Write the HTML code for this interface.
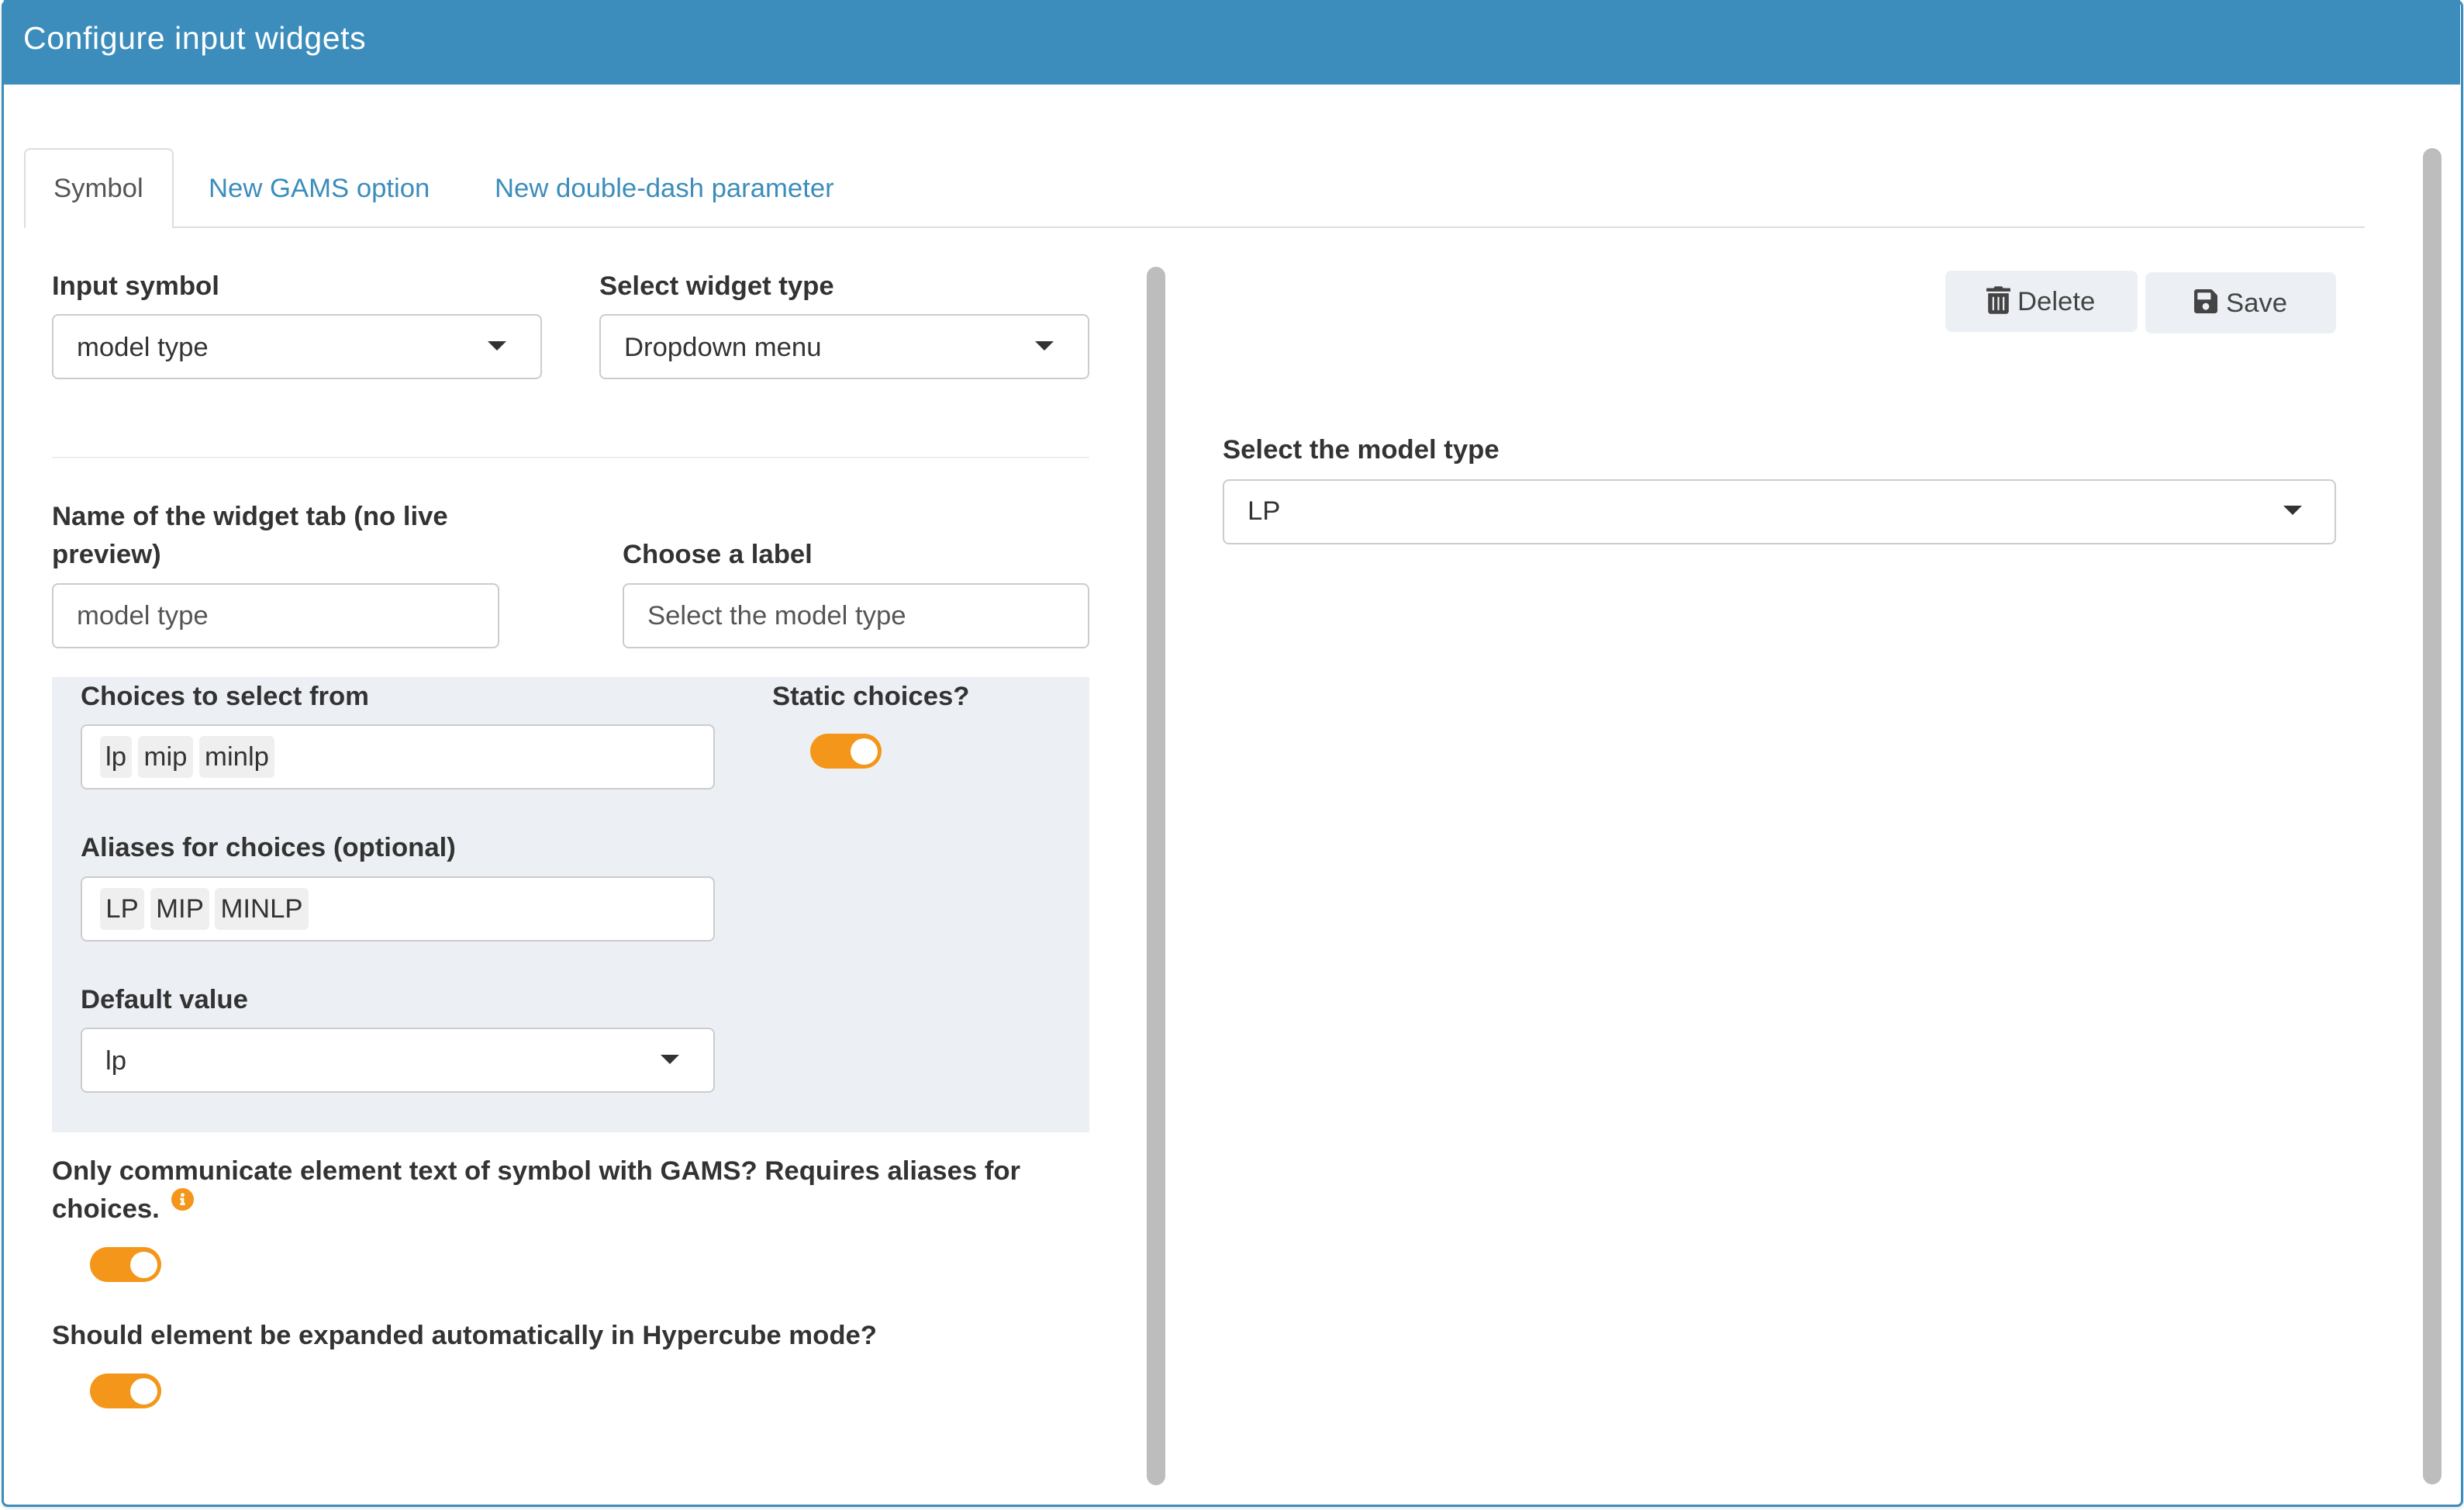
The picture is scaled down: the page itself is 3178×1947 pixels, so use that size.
<!DOCTYPE html>
<html>
<head>
<meta charset="utf-8">
<title>Configure input widgets</title>
<style>
html,body{margin:0;padding:0;background:#fff}
body{position:relative;width:3178px;height:1947px;overflow:hidden;font-family:"Liberation Sans",sans-serif;color:#333}
.a{position:absolute;box-sizing:border-box}
.t{position:absolute;white-space:nowrap;font-size:34.7px;line-height:48px;height:48px}
.b{font-weight:700}
.box{position:absolute;box-sizing:border-box;background:#fff;border:2px solid #ccc;border-radius:8px}
.arr{position:absolute;width:0;height:0;border-left:12.5px solid transparent;border-right:12.5px solid transparent;border-top:12px solid #333}
.chip{position:absolute;background:#efefef;border-radius:6px;font-size:34.7px;line-height:54px;height:54px;text-align:center;white-space:nowrap}
.tog{position:absolute;width:92px;height:45px;border-radius:23px;background:#f39619}
.tog i{position:absolute;left:52px;top:6px;width:35px;height:34px;border-radius:50%;background:#fff}
.sb{position:absolute;width:24px;background:#bdbdbd;border-radius:12px}
.btn{position:absolute;background:#ecf0f5;border-radius:8px}
</style>
</head>
<body>
<div class="a" style="left:2px;top:0;width:3175px;height:1943px;border:3px solid #3c8dbc;border-radius:8px;background:#fff;box-shadow:0 2px 4px rgba(0,0,0,.12)"></div>
<div class="a" style="left:5px;top:0;width:3168px;height:109px;background:#3c8dbc"></div>
<div class="t" style="left:30px;top:25px;color:#fff;font-size:41px;letter-spacing:.6px">Configure input widgets</div>

<!-- tabs -->
<div class="a" style="left:223px;top:292px;width:2827px;height:2px;background:#ddd"></div>
<div class="a" style="left:31px;top:191px;width:193px;height:103px;border:2px solid #ddd;border-bottom:0;border-radius:8px 8px 0 0;background:#fff"></div>
<div class="t" style="left:69px;top:219px;color:#555">Symbol</div>
<div class="t" style="left:269px;top:219px;color:#3c8dbc">New GAMS option</div>
<div class="t" style="left:638px;top:219px;color:#3c8dbc">New double-dash parameter</div>

<!-- top selects -->
<div class="t b" style="left:67px;top:345px">Input symbol</div>
<div class="t b" style="left:773px;top:345px">Select widget type</div>
<div class="box" style="left:67px;top:405px;width:632px;height:84px"></div>
<div class="t" style="left:99px;top:424px">model type</div>
<div class="arr" style="left:629px;top:440px"></div>
<div class="box" style="left:773px;top:405px;width:632px;height:84px"></div>
<div class="t" style="left:805px;top:424px">Dropdown menu</div>
<div class="arr" style="left:1335px;top:440px"></div>

<div class="a" style="left:67px;top:589px;width:1338px;height:2px;background:#eee"></div>

<!-- name / label -->
<div class="t b" style="left:67px;top:642px">Name of the widget tab (no live</div>
<div class="t b" style="left:67px;top:691px">preview)</div>
<div class="t b" style="left:803px;top:691px">Choose a label</div>
<div class="box" style="left:67px;top:752px;width:577px;height:84px"></div>
<div class="t" style="left:99px;top:770px;color:#555">model type</div>
<div class="box" style="left:803px;top:752px;width:602px;height:84px"></div>
<div class="t" style="left:835px;top:770px;color:#555">Select the model type</div>

<!-- grey box -->
<div class="a" style="left:67px;top:873px;width:1338px;height:587px;background:#ecf0f5"></div>
<div class="t b" style="left:104px;top:874px">Choices to select from</div>
<div class="box" style="left:104px;top:934px;width:818px;height:84px"></div>
<div class="chip" style="left:129px;top:949px;width:41px">lp</div>
<div class="chip" style="left:178px;top:949px;width:71px">mip</div>
<div class="chip" style="left:257px;top:949px;width:97px">minlp</div>

<div class="t b" style="left:104px;top:1069px">Aliases for choices (optional)</div>
<div class="box" style="left:104px;top:1130px;width:818px;height:84px"></div>
<div class="chip" style="left:129px;top:1145px;width:57px">LP</div>
<div class="chip" style="left:194px;top:1145px;width:76px">MIP</div>
<div class="chip" style="left:277px;top:1145px;width:121px">MINLP</div>

<div class="t b" style="left:104px;top:1265px">Default value</div>
<div class="box" style="left:104px;top:1325px;width:818px;height:84px"></div>
<div class="t" style="left:136px;top:1344px">lp</div>
<div class="arr" style="left:852px;top:1360px"></div>

<div class="t b" style="left:996px;top:874px">Static choices?</div>
<div class="tog" style="left:1045px;top:946px"><i></i></div>

<!-- lower -->
<div class="t b" style="left:67px;top:1486px">Only communicate element text of symbol with GAMS? Requires aliases for</div>
<div class="t b" style="left:67px;top:1535px">choices.</div>
<svg class="a" style="left:221px;top:1532px;width:29px;height:29px" viewBox="8 8 496 496"><path fill="#f39619" d="M256 8C119.043 8 8 119.083 8 256c0 136.997 111.043 248 248 248s248-111.003 248-248C504 119.083 392.957 8 256 8zm0 110c23.196 0 42 18.804 42 42s-18.804 42-42 42-42-18.804-42-42 18.804-42 42-42zm56 254c0 6.627-5.373 12-12 12h-88c-6.627 0-12-5.373-12-12v-24c0-6.627 5.373-12 12-12h12v-64h-12c-6.627 0-12-5.373-12-12v-24c0-6.627 5.373-12 12-12h64c6.627 0 12 5.373 12 12v100h12c6.627 0 12 5.373 12 12v24z"/></svg>
<div class="tog" style="left:116px;top:1608px"><i></i></div>
<div class="t b" style="left:67px;top:1698px">Should element be expanded automatically in Hypercube mode?</div>
<div class="tog" style="left:116px;top:1771px"><i></i></div>

<!-- scrollbars -->
<div class="sb" style="left:1479px;top:344px;height:1571px"></div>
<div class="sb" style="left:3125px;top:191px;height:1723px"></div>

<!-- right pane -->
<div class="btn" style="left:2509px;top:349px;width:248px;height:79px"></div>
<svg class="a" style="left:2562px;top:369px;width:31px;height:36px" viewBox="0 0 448 512"><path fill="#444" d="M32 464a48 48 0 0 0 48 48h288a48 48 0 0 0 48-48V128H32zm272-256a16 16 0 0 1 32 0v224a16 16 0 0 1-32 0zm-96 0a16 16 0 0 1 32 0v224a16 16 0 0 1-32 0zm-96 0a16 16 0 0 1 32 0v224a16 16 0 0 1-32 0zM432 32H312l-9.4-18.7A24 24 0 0 0 281.1 0H166.8a23.72 23.72 0 0 0-21.4 13.3L136 32H16A16 16 0 0 0 0 48v32a16 16 0 0 0 16 16h416a16 16 0 0 0 16-16V48a16 16 0 0 0-16-16z"/></svg>
<div class="t" style="left:2602px;top:365px;color:#444">Delete</div>
<div class="btn" style="left:2767px;top:351px;width:246px;height:79px"></div>
<svg class="a" style="left:2830px;top:373px;width:30px;height:31px" viewBox="0 32 448 448" preserveAspectRatio="none"><path fill="#444" d="M433.941 129.941l-83.882-83.882A48 48 0 0 0 316.118 32H48C21.49 32 0 53.49 0 80v352c0 26.51 21.49 48 48 48h352c26.51 0 48-21.49 48-48V163.882a48 48 0 0 0-14.059-33.941zM224 416c-35.346 0-64-28.654-64-64 0-35.346 28.654-64 64-64s64 28.654 64 64c0 35.346-28.654 64-64 64zm96-304.52V212c0 6.627-5.373 12-12 12H76c-6.627 0-12-5.373-12-12V108c0-6.627 5.373-12 12-12h228.52c3.183 0 6.235 1.264 8.485 3.515l3.48 3.48A11.996 11.996 0 0 1 320 111.48z"/></svg>
<div class="t" style="left:2871px;top:367px;color:#444">Save</div>

<div class="t b" style="left:1577px;top:556px">Select the model type</div>
<div class="box" style="left:1577px;top:618px;width:1436px;height:84px"></div>
<div class="t" style="left:1609px;top:635px">LP</div>
<div class="arr" style="left:2945px;top:652px"></div>
</body>
</html>
